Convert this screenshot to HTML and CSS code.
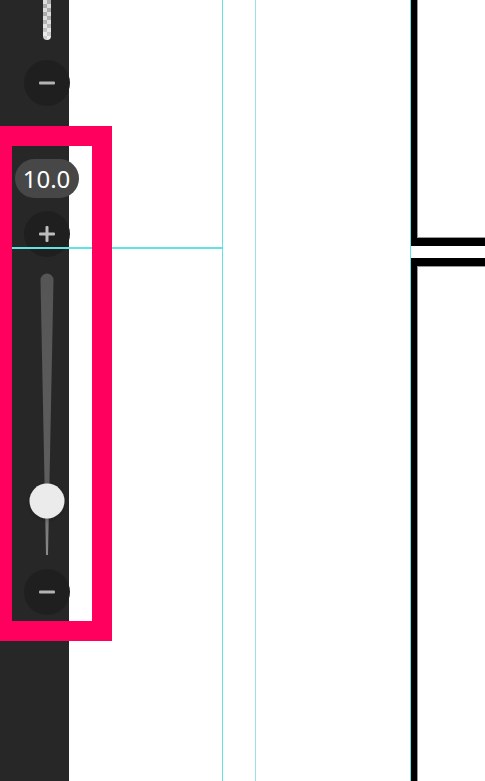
FILE: index.html
```html
<!DOCTYPE html>
<html lang="en">
<head>
  <meta charset="UTF-8">
  <meta name="viewport" content="width=device-width, initial-scale=1.0">
  <title>Brush size</title>
  <link rel="stylesheet" href="styles.css">
</head>
<body>
  <div class="app">
    <div class="sidebar">
      <div class="opacity-track"></div>
      <button class="round-btn" aria-label="Less opacity">
        <svg width="16" height="16" viewBox="0 0 16 16"><rect x="0" y="6.5" width="16" height="3" rx="1" fill="#b3b3b3"/></svg>
      </button>

      <div class="size-label">10.0</div>
      <button class="round-btn plus" aria-label="Bigger brush">
        <svg width="16" height="16" viewBox="0 0 16 16"><rect x="0" y="6.5" width="16" height="3" rx="1" fill="#bdbdbd"/><rect x="6.5" y="0" width="3" height="16" rx="1" fill="#bdbdbd"/></svg>
      </button>

      <svg class="size-slider" width="46" height="282" viewBox="0 0 46 282">
        <defs>
          <linearGradient id="trackFill" x1="0" y1="0" x2="0" y2="1">
            <stop offset="0" stop-color="#555"/>
            <stop offset="0.75" stop-color="#5e5e5e"/>
            <stop offset="1" stop-color="#8a8a8a"/>
          </linearGradient>
          <filter id="thumbShadow" x="-50%" y="-50%" width="200%" height="200%">
            <feDropShadow dx="0" dy="1" stdDeviation="2" flood-color="#000" flood-opacity="0.25"/>
          </filter>
        </defs>
        <path d="M16.5 7 A6.5 6.5 0 0 1 29.5 7 L24 282 L22 282 Z" fill="url(#trackFill)"/>
        <circle cx="23" cy="228" r="17.5" fill="#ebebeb" filter="url(#thumbShadow)"/>
      </svg>

      <button class="round-btn" aria-label="Smaller brush">
        <svg width="16" height="16" viewBox="0 0 16 16"><rect x="0" y="6.5" width="16" height="3" rx="1" fill="#b3b3b3"/></svg>
      </button>
    </div>

    <div class="canvas">
      <div class="frame frame-top"></div>
      <div class="frame frame-bottom"></div>
    </div>

    <!-- snapping guides drawn over the whole view -->
    <div class="guide guide-v guide-a"></div>
    <div class="guide guide-v guide-b"></div>
    <div class="guide guide-v guide-c"></div>
    <div class="guide guide-h"></div>

    <div class="highlight"></div>
  </div>
</body>
</html>
```

FILE: styles.css
```css
body {
  margin: 0;
  background: #fff;
  font-family: 'Noto Sans', 'Open Sans', sans-serif;
  overflow: hidden;
}

.app {
  position: relative;
  display: flex;
  width: 485px;
  height: 781px;
  overflow: hidden;
}

.sidebar {
  width: 69px;
  flex-shrink: 0;
  background-color: #272727;
  display: flex;
  flex-direction: column;
  align-items: center;
  padding-left: 24px;
  box-sizing: border-box;
}

.opacity-track {
  width: 8px;
  height: 40px;
  border-radius: 0 0 4px 4px;
  background-color: #eee;
  background-image:
    linear-gradient(to bottom, rgba(255, 255, 255, 0) 40%, rgba(255, 255, 255, 0.5)),
    repeating-conic-gradient(#a9a9a9 0 25%, #dcdcdc 0 50%);
  background-size: 100% 100%, 8px 8px;
}

.round-btn {
  width: 46px;
  height: 46px;
  border-radius: 50%;
  border: none;
  padding: 0;
  background-color: #1f1f1f;
  display: flex;
  align-items: center;
  justify-content: center;
  margin-top: 20px;
  flex-shrink: 0;
}

.size-label {
  margin-top: 53px;
  width: 64px;
  height: 39px;
  border-radius: 20px;
  background-color: #474747;
  color: #fff;
  font-size: 24px;
  line-height: 39px;
  text-align: center;
  flex-shrink: 0;
}

.plus {
  margin-top: 13px;
}

.size-slider {
  display: block;
  margin-top: 16px;
  overflow: visible;
  flex-shrink: 0;
}

.size-slider + .round-btn {
  margin-top: 14px;
}

.canvas {
  flex: 1;
  position: relative;
}

.frame {
  position: absolute;
  left: 341px;
  width: 200px;
  border: 0 solid #000;
}

.frame-top {
  top: -20px;
  height: 258px;
  border-width: 0 0 8px 7px;
  box-shadow: inset 1px -1px 0 #999;
}

.frame-bottom {
  top: 258px;
  height: 600px;
  border-width: 8px 0 0 7px;
  box-shadow: inset 1px 1px 0 #999;
}

.guide {
  position: absolute;
  background-color: #62e3e3;
}

.guide-v {
  top: 0;
  width: 1px;
  height: 781px;
}

.guide-a {
  left: 222px;
}

.guide-b {
  left: 255px;
  background-color: #9fdfe8;
}

.guide-c {
  left: 410px;
}

.guide-h {
  left: 0;
  top: 247px;
  width: 223px;
  height: 2px;
}

.highlight {
  position: absolute;
  left: -8px;
  top: 126px;
  width: 120px;
  height: 515px;
  box-sizing: border-box;
  border: 20px solid #ff005f;
}
```
